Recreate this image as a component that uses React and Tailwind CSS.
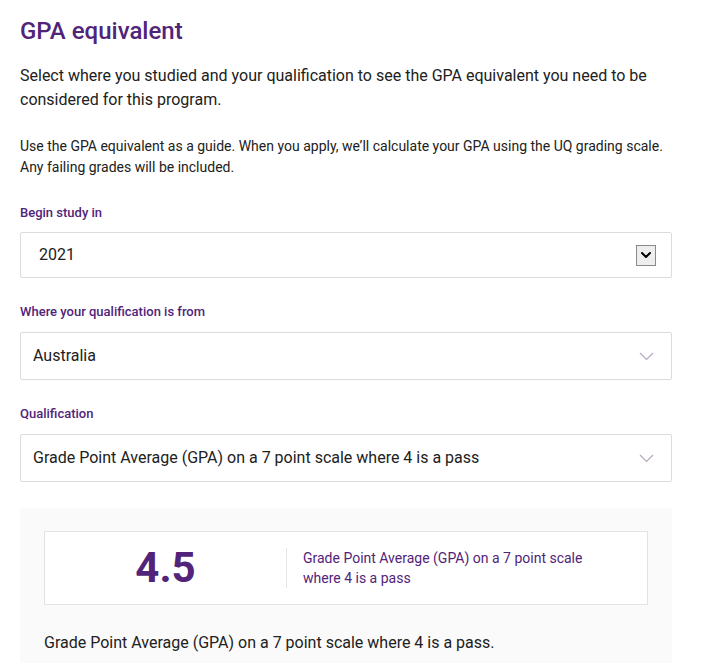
import { ChevronDown } from 'lucide-react';

const fields = [
  { label: 'Where your qualification is from', value: 'Australia' },
  { label: 'Qualification', value: 'Grade Point Average (GPA) on a 7 point scale where 4 is a pass' },
];

const Chevron = () => (
  <svg width="15" height="9" viewBox="0 0 15 9" fill="none" className="shrink-0">
    <path d="M1 1l6.5 6.5L14 1" stroke="#b3a8bf" strokeWidth="1.2" />
  </svg>
);

const App = () => {
  return (
    <div className="bg-white min-h-[663px] font-['Roboto',sans-serif] text-[#212121] pl-5 pr-12 pt-4">
      <h2 className="text-[24px] leading-[30px] font-medium text-[#51247a]">GPA equivalent</h2>
      <p className="text-[16px] leading-[24px] mt-[18px]">
        Select where you studied and your qualification to see the GPA equivalent you need to be considered for this program.
      </p>
      <p className="text-[14px] leading-[21px] mt-[24px] pr-1">
        Use the GPA equivalent as a guide. When you apply, we’ll calculate your GPA using the UQ grading scale. Any failing grades will be included.
      </p>

      <div className="mt-[25px]">
        <p className="text-[13px] leading-5 font-medium text-[#51247a]">Begin study in</p>
        <div className="mt-[9px] h-[46px] border border-[#dcdcdc] rounded-[2px] flex items-center justify-between pl-[18px] pr-[15px]">
          <span className="text-[16px]">2021</span>
          <span className="w-[20px] h-[21px] border border-[#8a8a8a] bg-[#eeeeee] flex items-center justify-center">
            <ChevronDown size={16} strokeWidth={3} className="text-black" />
          </span>
        </div>
      </div>

      {fields.map((f) => (
        <div key={f.label} className="mt-[24px]">
          <p className="text-[13px] leading-5 font-medium text-[#51247a]">{f.label}</p>
          <div className="mt-[10px] h-[48px] border border-[#dcdcdc] rounded-[2px] flex items-center justify-between pl-3 pr-[17px]">
            <span className="text-[16px]">{f.value}</span>
            <Chevron />
          </div>
        </div>
      ))}

      <div className="mt-[26px] bg-[#fafafa] px-6 pt-[23px] pb-5">
        <div className="bg-white border border-[#e2e2e2] h-[74px] flex items-center">
          <div className="w-[241px] text-center text-[42px] font-bold text-[#51247a] leading-none">4.5</div>
          <div className="w-px h-10 bg-[#e4e4e4]" />
          <p className="ml-[16px] text-[14px] leading-[20px] text-[#51247a] w-[300px]">
            Grade Point Average (GPA) on a 7 point scale where 4 is a pass
          </p>
        </div>
        <p className="text-[16px] leading-6 mt-[26px]">Grade Point Average (GPA) on a 7 point scale where 4 is a pass.</p>
      </div>
    </div>
  );
};

export default App;
